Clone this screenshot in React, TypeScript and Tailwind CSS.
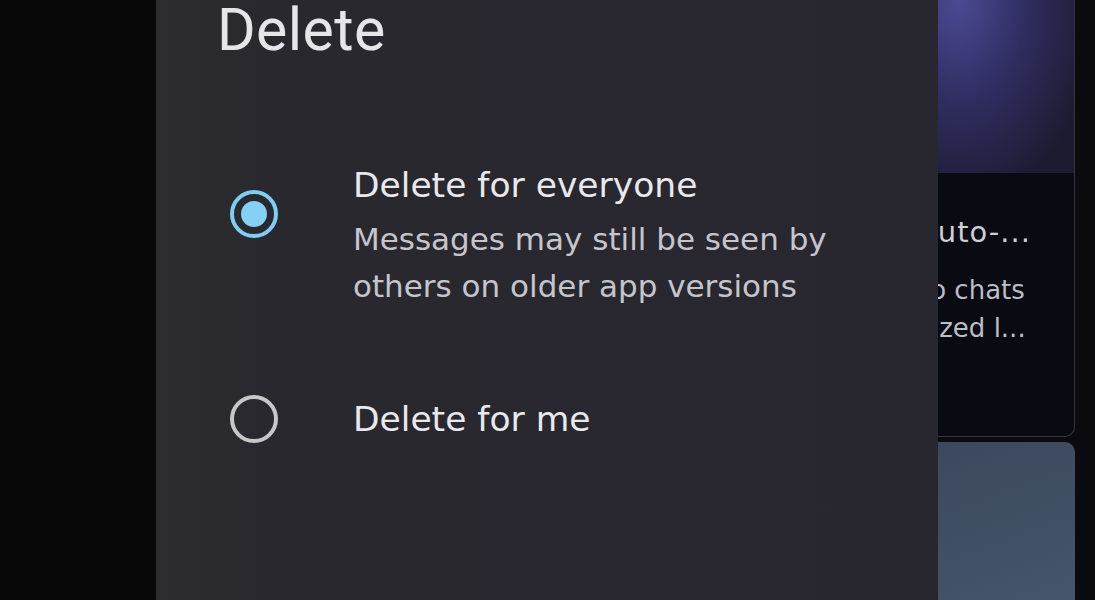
import React from "react";

const body = { fontFamily: '"DejaVu Sans", "Noto Sans", sans-serif' };

function Radio({ checked }: { checked: boolean }) {
  return (
    <div
      className={
        "w-[48px] h-[48px] rounded-full border-[4px] flex items-center justify-center shrink-0 " +
        (checked ? "border-[#7fcdf1]" : "border-[#c7c7ca]")
      }
    >
      {checked && <div className="w-[26px] h-[26px] rounded-full bg-[#86cff5]" />}
    </div>
  );
}

export default function App() {
  return (
    <div className="flex w-[1095px] h-[600px] overflow-hidden bg-[#0b0b0f]">
      {/* left dimmed area */}
      <div className="w-[156px] h-full bg-[#080808] shrink-0" />

      {/* dialog */}
      <div className="w-[782px] h-full shrink-0 flex flex-col bg-[linear-gradient(to_right,#2d2c2e,#29282f_14%,#28272f)]">
        <h1
          className="pl-[61px] text-[59px] leading-[59px] tracking-[0.4px] text-[#e6e6ea] font-normal"
          style={{ fontFamily: "Roboto, sans-serif" }}
        >
          Delete
        </h1>

        <div className="flex mt-[106px]" style={body}>
          <div className="ml-[74px] mt-[25px]">
            <Radio checked />
          </div>
          <div className="ml-[75px]">
            <div className="text-[34.5px] leading-[40px] text-[#e9e9ed]">Delete for everyone</div>
            <div className="mt-[11px] text-[31px] leading-[47px] text-[#c5c5cc]">
              Messages may still be seen by
              <br />
              others on older app versions
            </div>
          </div>
        </div>

        <div className="flex items-center mt-[85px] h-[48px]" style={body}>
          <div className="ml-[74px]">
            <Radio checked={false} />
          </div>
          <div className="ml-[75px] text-[34.5px] leading-[40px] text-[#e9e9ed]">Delete for me</div>
        </div>
      </div>

      {/* background cards on the right */}
      <div className="flex-1 h-full flex flex-col pr-[20px] overflow-hidden" style={body}>
        <div className="h-[437px] flex flex-col rounded-br-[10px] border-r border-b border-[#34343c] bg-[#0a0a12] overflow-hidden">
          <div className="h-[173px] bg-[radial-gradient(ellipse_at_15%_0%,#4b4a94_0%,#302e62_40%,#1c1b30_85%)]" />
          <div className="pt-[44px] whitespace-nowrap">
            <div className="ml-[-21px] text-[29px] leading-[30px] tracking-[1px] text-[#cdcdd4]">
              Auto-...
            </div>
            <div className="mt-[24px] ml-[-18px] text-[26px] leading-[38px] text-[#bdbdc5]">to chats</div>
            <div className="ml-[-6px] text-[26px] leading-[38px] text-[#bdbdc5]">ized l...</div>
          </div>
        </div>
        <div className="mt-[5px] flex-1 rounded-tr-[10px] bg-[linear-gradient(160deg,#3c485e,#45556b)]" />
      </div>
    </div>
  );
}
